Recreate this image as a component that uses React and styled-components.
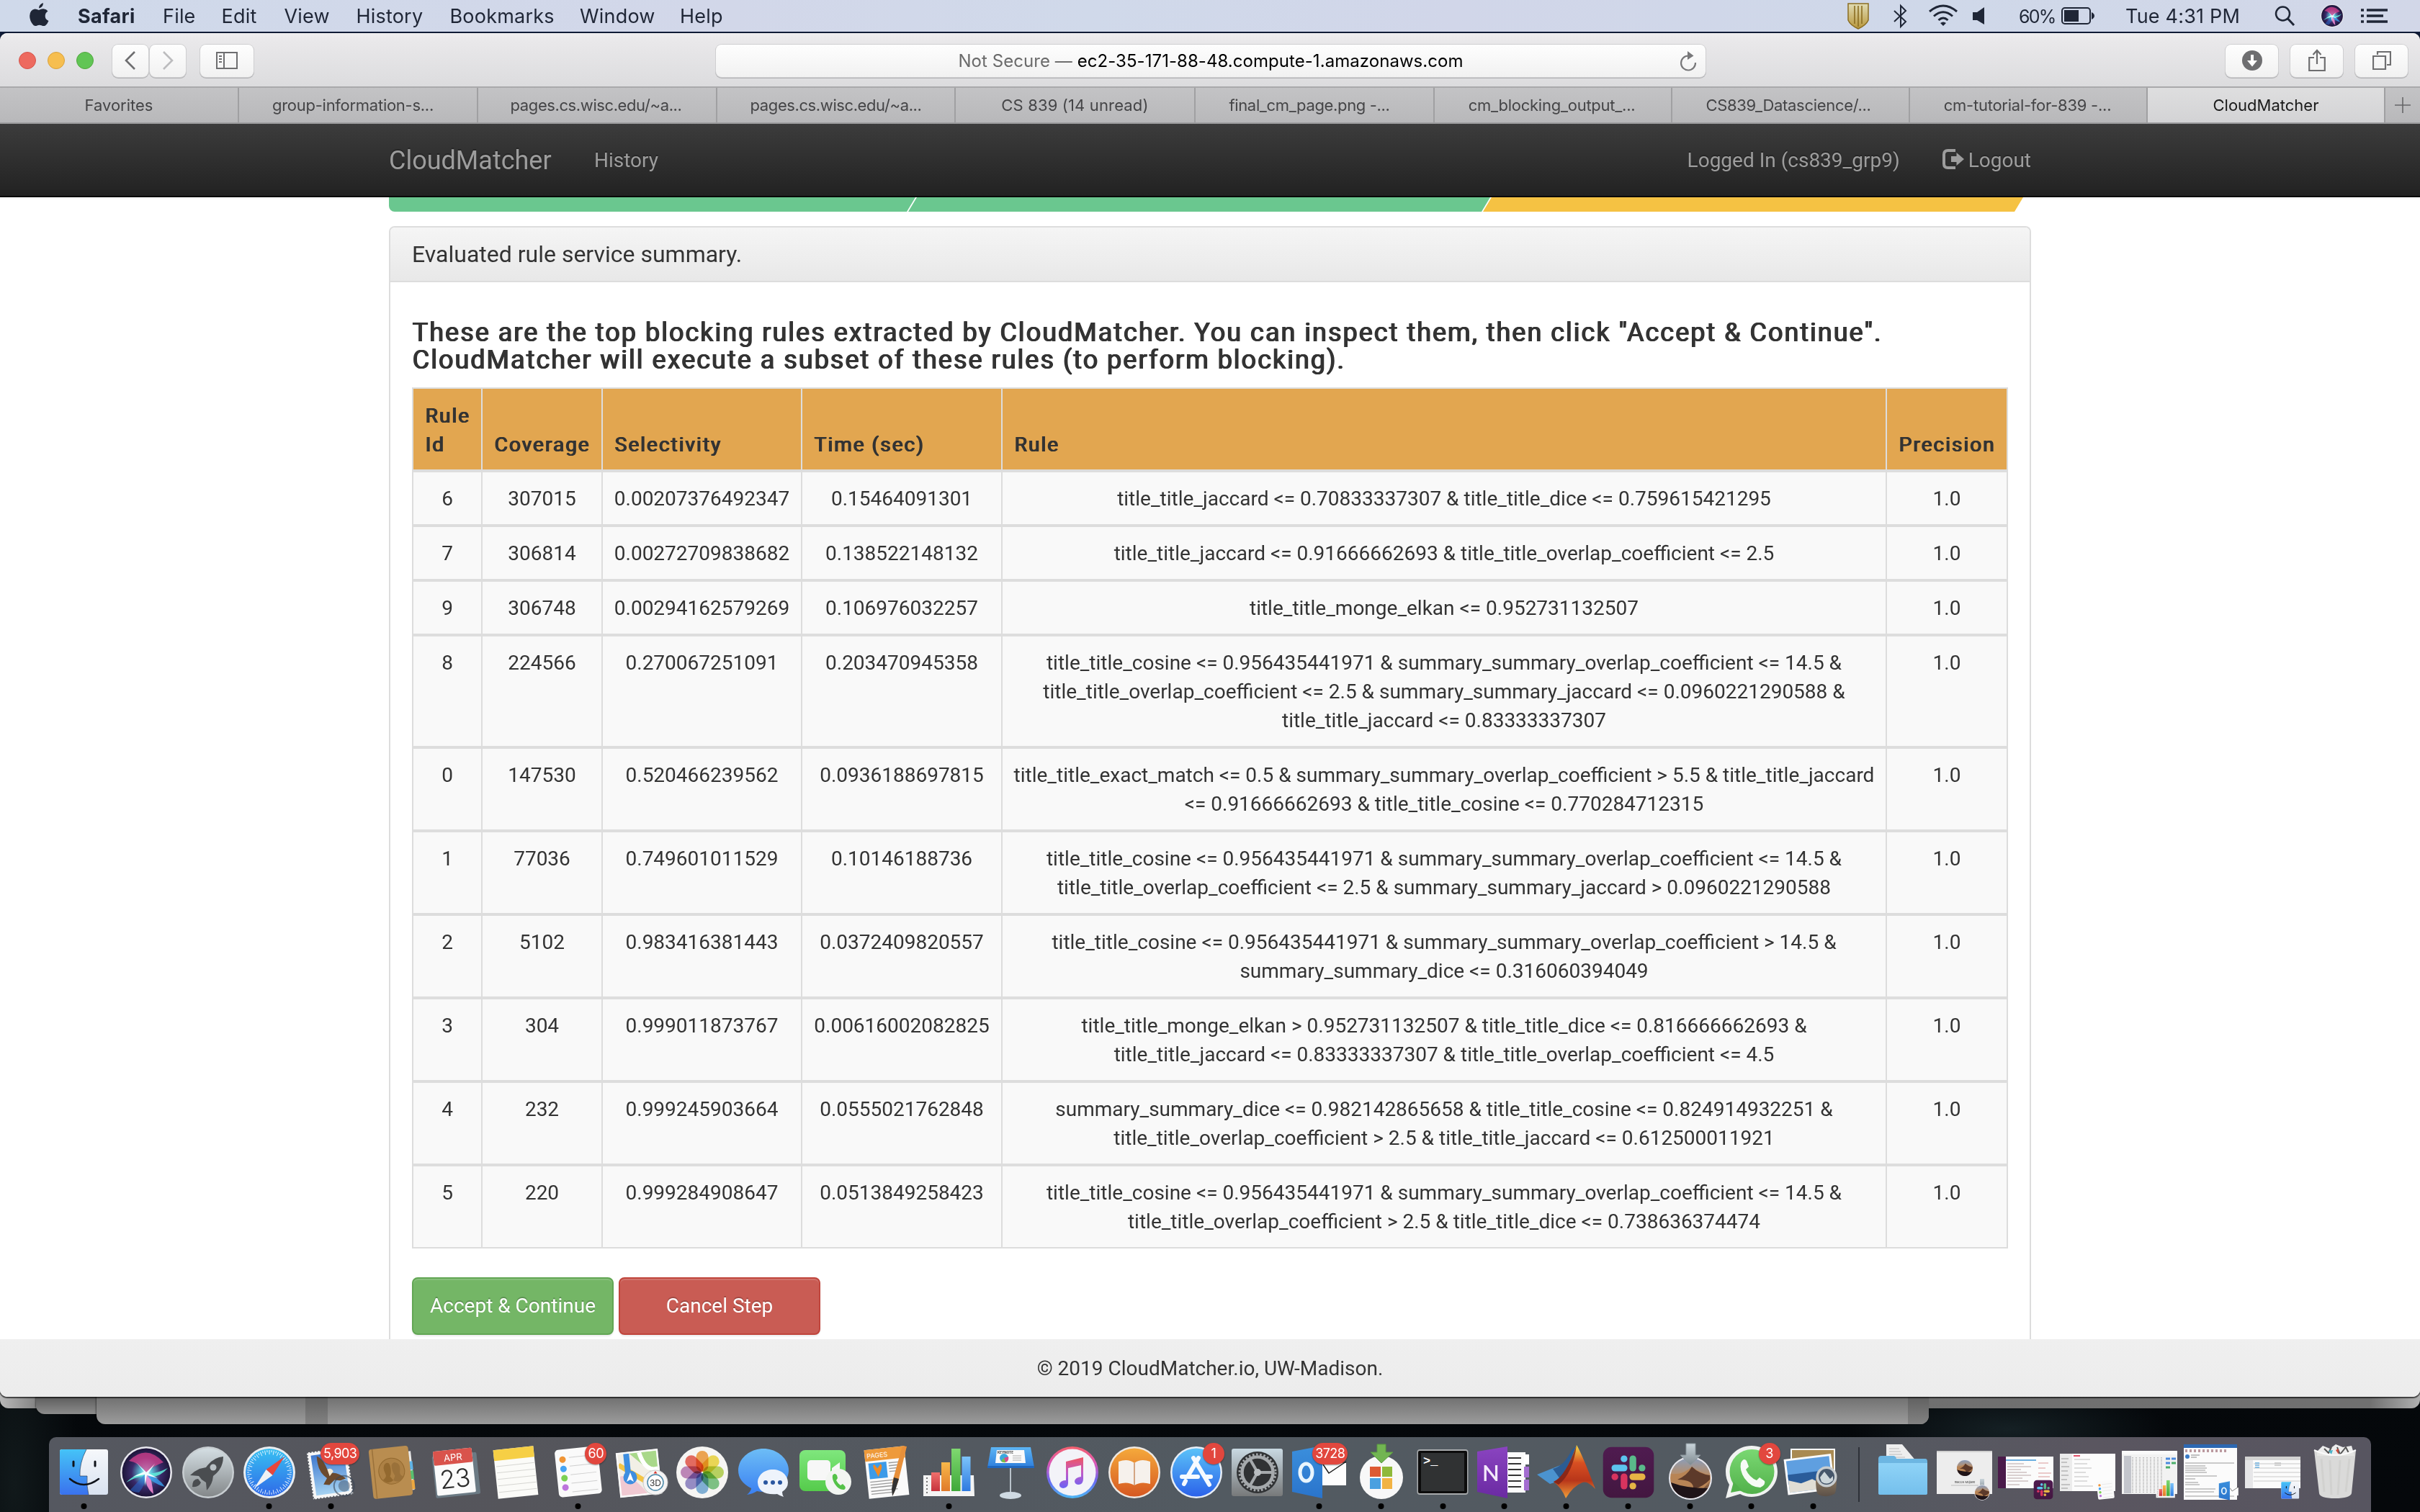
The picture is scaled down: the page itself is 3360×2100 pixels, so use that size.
import React from "react";
import styled, { createGlobalStyle, css } from "styled-components";

const UI = `Inter, "Liberation Sans", sans-serif`;
const WEB = `Roboto, "Liberation Sans", sans-serif`;

const GlobalStyle = createGlobalStyle`
  html, body { margin: 0; padding: 0; background: #04070a; }
  *, *::before, *::after { box-sizing: border-box; }
`;

/* Regular outlines smeared sideways, with the wider advance that goes with it. */
const smearedBold = css`
  font-weight: 400;
  letter-spacing: 2px;
  text-shadow: 0.8px 0 0 currentColor, 1.5px 0 0 currentColor;
`;

/* ---------- desktop ---------- */

const Desktop = styled.div`
  position: relative;
  display: flex;
  flex-direction: column;
  width: 3360px;
  height: 2100px;
  overflow: hidden;
  background:
    radial-gradient(220px 60px at 2790px 1985px, #152024, transparent),
    radial-gradient(90px 300px at 20px 2060px, #11191b, transparent),
    linear-gradient(180deg, #101c38 0, #101c38 60px, #030609 120px, #05080b 100%);
`;

const BackWindow = styled.div`
  position: absolute;
  left: ${(p) => p.$left}px;
  width: ${(p) => p.$width}px;
  top: 1900px;
  height: ${(p) => p.$bottom - 1900}px;
  border-radius: 0 0 12px 12px;
  background: ${(p) => p.$fill};
  box-shadow: -1px 0 2px rgba(0, 0, 0, 0.45);
`;

const BackStripe = styled.div`
  position: absolute;
  top: 0;
  bottom: 0;
  left: ${(p) => p.$left}px;
  width: ${(p) => p.$width}px;
  border-radius: ${(p) => (p.$end ? "0 0 12px 0" : "0")};
  background: linear-gradient(180deg, #606060 40px, #828282 78px);
`;

/* ---------- menu bar ---------- */

const MenuBar = styled.header`
  display: flex;
  align-items: center;
  flex: none;
  height: 44px;
  margin-bottom: 2px;
  padding-left: 40px;
  background: linear-gradient(90deg, #cfd9ea, #d2d7e9 30%, #d0d9ea 45%, #d1d6e9 60%, #cfd8e9 80%, #d2d7e8);
  color: #1f2636;
  font: 400 27px/44px ${UI};
`;

const MenuIcon = styled.svg`
  flex: none;
  display: block;
  width: ${(p) => p.$w}px;
  height: 44px;
  margin-right: ${(p) => p.$gap || 0}px;
  overflow: visible;
`;

const MenuItem = styled.span`
  flex: none;
  width: ${(p) => p.$w}px;
  padding-top: 1px;
  font-size: ${(p) => p.$size || 27}px;
  font-weight: ${(p) => (p.$bold ? 700 : 400)};
  letter-spacing: ${(p) => p.$ls ?? 0.2}px;
  white-space: nowrap;
`;

const MenuSpacer = styled.div`
  flex: 1;
`;

/* ---------- browser window ---------- */

const Window = styled.section`
  position: relative;
  display: flex;
  flex-direction: column;
  flex: none;
  height: 1894px;
  border-radius: 10px;
  overflow: hidden;
  background: #fff;
`;

const WindowShadow = styled.div`
  position: relative;
  flex: none;
  border-radius: 10px;
  box-shadow: 0 1px 1px 1px rgba(0, 0, 0, 0.6);
`;

const Toolbar = styled.div`
  display: flex;
  align-items: center;
  flex: none;
  height: 76px;
  padding: 2px 16px 0 26px;
  background: linear-gradient(180deg, #efeef0, #e9e8ea 15%, #dcdcde);
  border-bottom: 2px solid #a9a9ab;
`;

const Lights = styled.div`
  display: flex;
  gap: 16px;
  margin-right: 26px;
`;

const Light = styled.i`
  width: 24px;
  height: 24px;
  border-radius: 50%;
  background: ${(p) => p.$color};
  border: 1px solid ${(p) => p.$edge};
`;

const ToolButton = styled.div`
  display: flex;
  align-items: center;
  justify-content: center;
  flex: none;
  width: ${(p) => p.$w}px;
  height: 45px;
  margin-right: ${(p) => p.$gap || 0}px;
  border-radius: 8px;
  background: linear-gradient(180deg, #fefefe, #f1f1f1);
  box-shadow: 0 0 0 1px #cfcfd1, 0 1px 0 1px #b2b2b4;
`;

const Address = styled.div`
  position: relative;
  display: flex;
  align-items: center;
  justify-content: center;
  gap: 7px;
  width: 1374px;
  height: 45px;
  margin-left: 642px;
  margin-right: 722px;
  padding-top: 2px;
  border-radius: 8px;
  background: linear-gradient(180deg, #fefefe, #f1f1f1);
  box-shadow: 0 0 0 1px #cfcfd1, 0 1px 0 1px #b2b2b4;
  color: #000;
  font: 400 24px/44px ${UI};
  letter-spacing: 0.05px;
`;

const Muted = styled.span`
  color: #6b6b6b;
`;

const Reload = styled.svg`
  position: absolute;
  right: 10px;
  top: 8px;
`;

const TabBar = styled.nav`
  display: flex;
  flex: none;
  height: 50px;
  background: linear-gradient(180deg, #c3c3c5, #b8b8ba);
  border-bottom: 2px solid #9c9c9e;
  color: #454547;
  font: 400 22px/48px ${UI};
`;

const Tab = styled.div`
  flex: none;
  width: ${(p) => p.$w}px;
  padding-right: ${(p) => p.$shift || 0}px;
  text-align: center;
  white-space: nowrap;
  letter-spacing: ${(p) => p.$ls ?? 0}px;
  border-right: 2px solid #a0a0a2;
  color: ${(p) => (p.$active ? "#1a1a1a" : "inherit")};
  background: ${(p) => (p.$active ? "linear-gradient(180deg, #dededf, #d3d3d5)" : "none")};
`;

const NewTab = styled.div`
  display: flex;
  flex: 1;
  align-items: center;
  justify-content: center;
`;

/* ---------- web page ---------- */

const Navbar = styled.div`
  display: flex;
  align-items: center;
  flex: none;
  height: 102px;
  padding: 1px 540px 0;
  background: linear-gradient(180deg, #3c3c3c, #222);
  border-bottom: 2px solid #080808;
  color: #9d9d9d;
  font: 400 28px/40px ${WEB};
  text-shadow: 0 -2px 0 rgba(0, 0, 0, 0.25);
`;

const Brand = styled.span`
  width: 285px;
  font-size: 36px;
`;

const NavRight = styled.div`
  display: flex;
  align-items: center;
  margin-left: auto;
`;

const NavUser = styled.span`
  margin-right: 59px;
`;

const LogoutIcon = styled.svg`
  margin: -4px 6px 0 0;
`;

const Steps = styled.div`
  display: flex;
  flex: none;
  height: 20px;
  width: 2270px;
  margin-left: 540px;
`;

const Step = styled.div`
  width: ${(p) => p.$w}px;
  margin-right: -10px;
  background: ${(p) => p.$color};
  border-bottom-left-radius: ${(p) => (p.$first ? 8 : 0)}px;
  clip-path: ${(p) =>
    p.$first
      ? "polygon(0 0, 100% 0, calc(100% - 12px) 100%, 0 100%)"
      : "polygon(12px 0, 100% 0, calc(100% - 12px) 100%, 0 100%)"};
`;

const Panel = styled.main`
  display: flex;
  flex-direction: column;
  flex: 1;
  width: 2280px;
  min-height: 0;
  margin: 20px 0 0 540px;
  border: 2px solid #ddd;
  border-bottom: 0;
  border-radius: 8px 8px 0 0;
  color: #333;
  font: 400 28px/40px ${WEB};
`;

const PanelHeader = styled.div`
  flex: none;
  height: 76px;
  padding: 19px 30px 17px;
  background: linear-gradient(180deg, #f5f5f5, #e8e8e8);
  border-bottom: 2px solid #ddd;
  border-radius: 6px 6px 0 0;
  font-size: 32px;
  line-height: 36px;
`;

const PanelBody = styled.div`
  display: flex;
  flex-direction: column;
  padding: 51px 30px 0;
`;

const Heading = styled.h4`
  ${smearedBold}
  margin: 0 0 19px;
  height: 76px;
  font-size: 36px;
  line-height: 38px;
  white-space: nowrap;
`;

const RuleTable = styled.table`
  width: 2216px;
  table-layout: fixed;
  border-collapse: separate;
  border-spacing: 0;
  border-right: 2px solid #ddd;
  border-bottom: 0;
`;

const Th = styled.th`
  ${smearedBold}
  height: 116px;
  padding: 18px 14px 14px 16px;
  border: solid #ddd;
  border-width: 2px 0 2px 2px;
  background: #e2a650;
  text-align: left;
  vertical-align: bottom;
`;

const Td = styled.td`
  padding: 17px 0 15px;
  border: solid #ddd;
  border-width: 2px 0 2px 2px;
  background: #f9f9f9;
  text-align: center;
  vertical-align: top;
  white-space: nowrap;
`;

const Actions = styled.div`
  display: flex;
  gap: 7px;
  margin-top: 40px;
`;

const Button = styled.button`
  width: 280px;
  height: 80px;
  padding: 0;
  border: 2px solid ${(p) => p.$edge};
  border-radius: 8px;
  background: ${(p) => p.$color};
  box-shadow: inset 0 2px 0 rgba(255, 255, 255, 0.15), 0 2px 2px rgba(0, 0, 0, 0.075);
  color: #fff;
  font: 400 28px/40px ${WEB};
  text-shadow: 0 -2px 0 rgba(0, 0, 0, 0.2);
`;

const Footer = styled.footer`
  flex: none;
  height: 80px;
  padding-top: 1px;
  background: linear-gradient(180deg, #efefef, #ececec);
  color: #333;
  text-align: center;
  font: 400 28px/80px ${WEB};
`;

/* ---------- dock ---------- */

const Dock = styled.div`
  position: relative;
  display: flex;
  flex: none;
  width: 3224px;
  height: 104px;
  margin: 56px 0 0 68px;
  padding-left: 6px;
  border-radius: 10px 10px 0 0;
  background: linear-gradient(90deg, #555860, #55555b 20%, #54585f 30%, #525a61 50%, #535a61 75%, #5a5660 88%, #575560);
`;

const Slot = styled.div`
  position: relative;
  flex: none;
  width: 85.76px;
  height: 104px;
`;

const Glyph = styled.svg`
  display: block;
  width: 86px;
  height: 104px;
  overflow: visible;
`;

const Separator = styled.i`
  flex: none;
  width: 2px;
  height: 76px;
  margin: 14px 17px 0 19px;
  background: #2e3138;
`;

const Badge = styled.span`
  position: absolute;
  top: 8px;
  right: 3.5px;
  min-width: 30px;
  height: 30px;
  padding: 0 ${(p) => p.$pad || 0}px;
  border-radius: 15px;
  background: #e2473e;
  box-shadow: 0 1px 2px rgba(0, 0, 0, 0.4);
  color: #fff;
  text-align: center;
  font: 400 18px/30px ${UI};
  letter-spacing: -0.6px;
`;

/* ---------- drawings ---------- */

const stops = (list) =>
  list.map((c, i) => <stop key={i} offset={i / (list.length - 1)} stopColor={c} />);

const LINEAR = {
  finder: ["#45c3f7", "#3a72ee"],
  finderR: ["#f6f8fb", "#d9e2f0"],
  grey: ["#d4dee3", "#84888a"],
  safari: ["#38c0f2", "#2f69e8"],
  sky: ["#3f79cf", "#a5d2f2"],
  msg: ["#6dbdf6", "#3a80f2"],
  face: ["#7fe77d", "#55cb4b"],
  key: ["#5cb5f5", "#2f7fdc"],
  itunes: ["#f5606c", "#d959b8", "#6a6af2", "#4cb8f4"],
  note: ["#f05560", "#c05ac8", "#6a62f4"],
  books: ["#f5a93b", "#d65821"],
  store: ["#5bc2f8", "#2b62ea"],
  pref: ["#c9d9e2", "#77797a"],
  outlook: ["#3b8fdc", "#2a74cc"],
  one: ["#8a44c0", "#6a2aa2"],
  slack: ["#4f1b50", "#431740"],
  whats: ["#7ad872", "#52b14b"],
  matlab: ["#f4e04a", "#d84f22", "#b8361a", "#f0a03a"],
  folder: ["#8fd3f7", "#74bfec"],
  dune: ["#8a9dba", "#c08b5a", "#2c1a1c"],
  arrow: ["#c9d4da", "#7e8990"],
  red: ["#f0706c", "#c6323c"],
  orange: ["#f8b84a", "#e07a2a"],
  green: ["#7fd870", "#3fa83a"],
  blue: ["#7cc4fa", "#2e7ae0"],
  glass: ["#8e7a62", "#5c5148"],
  shield: ["#e0dcb4", "#b8963a"],
};

const DefsSvg = styled.svg`
  position: absolute;
`;

const Defs = () => (
  <DefsSvg width="0" height="0">
    <defs>
      {Object.entries(LINEAR).map(([id, list]) => (
        <linearGradient key={id} id={id} x1="0" y1="0" x2="0" y2="1">
          {stops(list)}
        </linearGradient>
      ))}
      <radialGradient id="siri" cx=".5" cy=".5" r=".55">
        <stop offset="0" stopColor="#dffcff" />
        <stop offset=".2" stopColor="#5fc6dc" />
        <stop offset=".55" stopColor="#3a2a6a" />
        <stop offset="1" stopColor="#150f2c" />
      </radialGradient>
    </defs>
  </DefsSvg>
);

const SiriOrb = ({ cx, cy, r }) => (
  <g>
    <circle cx={cx} cy={cy} r={r} fill="#e8e8ee" />
    <circle cx={cx} cy={cy} r={r * 0.93} fill="url(#siri)" />
    <g transform={`translate(${cx} ${cy}) scale(${r / 36})`}>
      <path d="M-24-16Q0-40 24-14Q8-8 0 0Q-10-14-24-16Z" fill="#d8408e" opacity=".75" />
      <path d="M-28 14Q-10-2 0 0Q10 4 30-6Q16 10 0 4Q-14 6-28 14Z" fill="#5ff0dc" opacity=".85" />
      <path d="M0 0Q-4 18 10 30Q8 12 4 2Z" fill="#f08ad0" opacity=".9" />
      <path d="M0 0Q18 8 26 20Q4 14 0 0Z" fill="#3aa0f0" opacity=".8" />
      <path d="M0 0Q-16 18-20 22Q-26 26-10 28Q0 16 0 0Z" fill="#2a70d8" opacity=".5" />
      <path d="M-14-14L0 0L12-12L3 1L16 8L1 4L-2 18L-2 3L-18 6L-3-1Z" fill="#effeff" />
    </g>
  </g>
);

const Dunes = ({ cx, cy, r }) => (
  <g transform={`translate(${cx} ${cy}) scale(${r / 28})`}>
    <circle r="30" fill="#e8e8ee" />
    <circle r="28" fill="url(#dune)" />
    <path d="M-27-6Q-10-4 2-16Q12-8 27-4L27 4Q12 24-6 26Q-24 20-27 4Z" fill="#b88455" />
    <path d="M2-16Q-4-4-18 2Q6 2 4 16Q20 10 27 2V-4Q12-6 2-16Z" fill="#5d3a2a" />
    <path d="M-27 6Q-6 14 24 14Q14 28 0 28Q-22 26-27 6Z" fill="#1f1418" />
  </g>
);

const SlackMark = ({ x, y, s }) => (
  <g transform={`translate(${x} ${y}) scale(${s})`}>
    <rect x="-36" y="-36" width="72" height="72" rx="12" fill="url(#slack)" />
    <rect x="-11" y="-24" width="9.5" height="9.5" rx="4.7" fill="#5cc3ee" />
    <rect x="-24" y="-11" width="22.5" height="9.5" rx="4.7" fill="#5cc3ee" />
    <rect x="1.5" y="-24" width="9.5" height="22.5" rx="4.7" fill="#5ab98a" />
    <rect x="14.5" y="-11" width="9.5" height="9.5" rx="4.7" fill="#5ab98a" />
    <rect x="-24" y="1.5" width="9.5" height="9.5" rx="4.7" fill="#d8345f" />
    <rect x="-11" y="1.5" width="9.5" height="22.5" rx="4.7" fill="#d8345f" />
    <rect x="1.5" y="1.5" width="22.5" height="9.5" rx="4.7" fill="#e6b445" />
    <rect x="1.5" y="14.5" width="9.5" height="9.5" rx="4.7" fill="#e6b445" />
  </g>
);

const FinderFace = () => (
  <g>
    <rect x="9" y="17" width="67" height="63" rx="3" fill="url(#finderR)" />
    <path d="M12 17H46Q36 36 37 54H47Q46 68 49 80H12Q9 80 9 77V20Q9 17 12 17Z" fill="url(#finder)" />
    <path d="M46 17Q36 36 37 54H47Q46 68 49 80" fill="none" stroke="#1c2b45" strokeWidth="1" opacity=".6" />
    <path d="M28 34V40M58 34V40" stroke="#10131a" strokeWidth="3" strokeLinecap="round" />
    <path d="M23 58Q42 74 63 58" fill="none" stroke="#10131a" strokeWidth="2.6" strokeLinecap="round" />
  </g>
);

const ChartBars = () => (
  <g>
    <path d="M7 53H77L78 82H7Z" fill="#f4f4f4" />
    <path d="M12 56V78" stroke="#777" strokeWidth="2" strokeDasharray="2 3" />
    <rect x="18" y="49" width="12" height="26" fill="url(#red)" />
    <rect x="32" y="35" width="12" height="40" fill="url(#orange)" />
    <rect x="46" y="16" width="12.5" height="59" fill="url(#green)" />
    <rect x="60.5" y="27" width="12" height="48" fill="url(#blue)" />
  </g>
);

const OutlookMark = () => (
  <g>
    <path d="M47 36H80V67H47Z" fill="#fdfdfd" />
    <path d="M48 38L56 50L80 34" fill="none" stroke="#1d1d1d" strokeWidth="1.5" />
    <path d="M5 20L47 12V85L5 76Z" fill="url(#outlook)" />
    <ellipse cx="24.5" cy="49" rx="8.5" ry="12" fill="none" stroke="#e9f5fd" strokeWidth="5" />
  </g>
);

const RemindersSheet = () => (
  <g transform="rotate(-6 43 49)">
    <rect x="13" y="15" width="60" height="66" rx="5" fill="#fafafa" />
    <path d="M32 27H68M32 39H68M32 51H68M32 63H68M32 75H68" stroke="#cfcfcf" />
    <circle cx="23" cy="29" r="4.5" fill="#f09536" />
    <circle cx="23" cy="42" r="4.5" fill="#45a4f4" />
    <circle cx="23" cy="55" r="4.5" fill="#7bd154" />
    <circle cx="23" cy="68" r="4.5" fill="#bd74dc" />
  </g>
);

const Label = ({ x, y, size, fill = "#fff", weight = 400, children, anchor = "middle", family = "Inter, sans-serif" }) => (
  <text x={x} y={y} fontSize={size} fill={fill} fontWeight={weight} textAnchor={anchor} fontFamily={family}>
    {children}
  </text>
);

const ticks = Array.from({ length: 60 }, (_, i) => i * 6);
const petals = ["#f29b38", "#f0d93c", "#b3d24a", "#6cbf74", "#6fa8d8", "#8a7fc4", "#b978b4", "#e8564a"];

const Petal = styled.rect`
  mix-blend-mode: multiply;
`;

const ICONS = {
  finder: <FinderFace />,
  siri: <SiriOrb cx={43} cy={49} r={36} />,
  launchpad: (
    <g>
      <circle cx="43" cy="49" r="36" fill="#c8ced2" />
      <circle cx="43" cy="49" r="33.5" fill="url(#grey)" />
      <path d="M64 27Q50 28 40 42L31 44Q24 47 18 53L30 54L34 59L40 63L41 74Q47 67 49 60L50 54Q64 44 64 27Z" fill="#4a4d50" />
      <circle cx="50" cy="42" r="4.5" fill="#b9c0c4" />
      <path d="M29 58Q21 58 21 69Q30 70 33 63Z" fill="#4a4d50" />
    </g>
  ),
  safari: (
    <g>
      <circle cx="43" cy="49" r="36" fill="#e9edf0" />
      <circle cx="43" cy="49" r="33" fill="url(#safari)" />
      {ticks.map((a) => (
        <path key={a} d={a % 12 ? "M43 18V21" : "M43 18V24"} stroke="#e3f1fd" strokeWidth="1" transform={`rotate(${a} 43 49)`} />
      ))}
      <path d="M64 27L47.5 53L38.5 45Z" fill="#e8463c" />
      <path d="M22 71L47.5 53L38.5 45Z" fill="#f0f2f4" />
    </g>
  ),
  mail: (
    <g transform="rotate(-8 43 49)">
      <rect x="13" y="17" width="56" height="66" fill="#f6f6f6" />
      <rect x="13" y="17" width="56" height="66" fill="none" stroke="#54585f" strokeWidth="2.5" strokeDasharray="2 2.5" />
      <rect x="18" y="22" width="46" height="56" fill="url(#sky)" />
      <path d="M26 24Q34 28 38 44L44 50Q52 50 62 60L54 62L46 60L38 66L30 64L36 56Q24 46 26 24Z" fill="#6b4a2e" />
      <path d="M38 44Q44 42 46 48L40 54Z" fill="#f3ead6" />
      <circle cx="58" cy="70" r="14" fill="none" stroke="#3b4657" strokeWidth="2" opacity=".6" />
      <circle cx="58" cy="70" r="8" fill="#44536a" opacity=".5" />
    </g>
  ),
  contacts: (
    <g transform="rotate(-6 43 49)">
      <path d="M64 22H70V76H64Z" fill="#e8e8e8" />
      <path d="M64 36H71V48H64Z" fill="#5fb4e8" />
      <path d="M64 49H71V61H64Z" fill="#58c070" />
      <path d="M64 62H71V75H64Z" fill="#eda840" />
      <rect x="12" y="14" width="55" height="69" rx="4" fill="#b98d50" />
      <path d="M17 14V83" stroke="#9a713a" strokeWidth="1.5" />
      <circle cx="41" cy="47" r="18" fill="#ad8145" stroke="#93692f" />
      <path d="M33 36Q40 32 40 44Q40 52 38 54L42 60Q34 66 28 58Q34 54 32 50Q28 40 33 36Z" fill="#93692f" />
      <path d="M48 36Q55 38 52 50Q52 54 56 56Q50 66 42 60L45 54Q40 44 42 38Q45 34 48 36Z" fill="#9a713a" />
    </g>
  ),
  calendar: (
    <g transform="rotate(-6 43 49)">
      <rect x="13" y="24" width="62" height="58" rx="2" fill="#6b7a84" />
      <rect x="15" y="17" width="54" height="62" rx="2" fill="#fbfbfb" />
      <rect x="15" y="17" width="54" height="20" rx="2" fill="#d9534c" />
      <Label x={42} y={32.5} size={13}>APR</Label>
      <Label x={42} y={70} size={35} fill="#2b2b2b" weight={300}>23</Label>
    </g>
  ),
  notes: (
    <g transform="rotate(-6 43 49)">
      <rect x="14" y="15" width="56" height="68" fill="#fbfbf8" />
      <rect x="14" y="15" width="56" height="15" fill="#f6cf45" />
      <path d="M16 38H69M16 47H69M16 56H69M16 65H69M16 74H69" stroke="#d6d6d2" />
    </g>
  ),
  reminders: <RemindersSheet />,
  maps: (
    <g>
      <g transform="rotate(-6 43 49)">
        <rect x="12" y="19" width="58" height="62" fill="#f2efe6" />
        <path d="M30 21H68V60Z" fill="#a9d88a" />
        <path d="M14 52Q30 48 50 79H14Z" fill="#f0c9d2" />
        <path d="M14 36L68 76" stroke="#f4c544" strokeWidth="7" />
        <path d="M26 21V60" stroke="#3e8ee0" strokeWidth="8" />
        <path d="M44 21Q50 50 68 46" stroke="#fff" strokeWidth="6" fill="none" />
        <rect x="13" y="20" width="56" height="60" fill="none" stroke="#fafafa" strokeWidth="2.5" />
      </g>
      <circle cx="29" cy="56" r="9.5" fill="#3e8ee0" />
      <path d="M29 49L34 62L29 59L24 62Z" fill="#fff" />
      <circle cx="64" cy="63" r="17" fill="#f4f4f4" stroke="#c9c9c9" />
      <circle cx="64" cy="63" r="11" fill="#fff" stroke="#4a88a8" strokeWidth="1.5" />
      <path d="M61.5 50.500L64 47L66.500 50.500Z" fill="#d8352c" />
      <Label x={64} y={67.5} size={12} fill="#333">3D</Label>
    </g>
  ),
  photos: (
    <g>
      <circle cx="43" cy="49" r="36" fill="#f6f5f3" />
      {petals.map((c, i) => (
        <Petal key={c} x="34.5" y="19" width="17" height="29" rx="8.5" fill={c} opacity=".85" transform={`rotate(${i * 45} 43 49)`} />
      ))}
    </g>
  ),
  messages: (
    <g>
      <path d="M43 16C62 16 78 30 78 46S62 76 43 76Q38 76 34 75Q28 79 20 80Q26 75 26 71Q8 62 8 46C8 30 24 16 43 16Z" fill="url(#msg)" />
      <path d="M56 45C68 45 77 53 77 63Q77 71 69 76Q69 80 71 83Q65 81 62 79Q36 81 35 63C35 53 44 45 56 45Z" fill="#eef3fb" />
      <circle cx="46" cy="63" r="3" fill="#2a56a0" />
      <circle cx="56" cy="63" r="3" fill="#2a56a0" />
      <circle cx="66" cy="63" r="3" fill="#2a56a0" />
    </g>
  ),
  facetime: (
    <g>
      <rect x="7" y="18" width="64" height="57" rx="8" fill="url(#face)" />
      <rect x="18" y="32" width="32" height="28" rx="5" fill="#f7f7f7" />
      <path d="M52 43L63 35V57L52 49Z" fill="#f7f7f7" />
      <circle cx="61" cy="62" r="18" fill="#f2f5f1" />
      <path d="M53 53Q56 49 59 53L60 57L58 60Q60 64 64 67L67 65L70 68Q72 71 69 73Q62 74 56 65Q52 58 53 53Z" fill="#54c248" />
    </g>
  ),
  pages: (
    <g>
      <g transform="rotate(-6 43 49)">
        <rect x="14" y="15" width="56" height="68" fill="#fafafa" />
        <rect x="14" y="15" width="56" height="16" fill="#ee9a3a" />
        <Label x={17} y={27} size={9} anchor="start">PAGES</Label>
        <rect x="18" y="34" width="25" height="22" fill="#3d9be8" />
        <path d="M30 54L27 46Q22 38 26 36L30 42L35 36Q38 40 34 46Z" fill="#f08a24" />
        <path d="M46 36H60M46 40H58M46 44H60M46 48H57M18 60H58M18 64H56M18 68H54M18 73H55M18 77H50" stroke="#999" strokeWidth="1.3" />
      </g>
      <path d="M64 12L70 13L58 62L51 80L50 62Z" fill="#e8903a" />
      <path d="M52 56L59 58L54 74L50 82L49 72Z" fill="#333" />
    </g>
  ),
  numbers: <ChartBars />,
  keynote: (
    <g>
      <path d="M42 42H44V80H42Z" fill="#b9c2ca" />
      <ellipse cx="43" cy="81" rx="15" ry="5" fill="#cfdae3" />
      <path d="M16 14H71L76 42H11Z" fill="url(#key)" />
      <path d="M11 40H76V43H11Z" fill="#1f66bd" />
      <path d="M24 18H62L64 36H22Z" fill="#fafafa" />
      <Label x={36} y={22.5} size={4.5} fill="#333" weight={700}>KEYNOTE</Label>
      <circle cx="34" cy="29" r="6" fill="#3ba7dd" />
      <path d="M34 29L40 27A6 6 0 0 1 36 35Z" fill="#d84d8c" />
      <path d="M34 29L36 35A6 6 0 0 1 30 33Z" fill="#7ac143" />
      <path d="M46 26H58M46 29H58M46 32H58" stroke="#aaa" />
    </g>
  ),
  itunes: (
    <g>
      <circle cx="43" cy="49" r="36" fill="url(#itunes)" />
      <circle cx="43" cy="49" r="32.5" fill="#f3f3f8" />
      <path d="M34 34L58 28V58Q58 65 52 66Q46 66 46 61Q47 56 55 55V39L37 43V64Q37 70 30 71Q24 70 25 65Q27 60 34 60Z" fill="url(#note)" />
    </g>
  ),
  ibooks: (
    <g>
      <circle cx="43" cy="49" r="36" fill="#eee8e2" />
      <circle cx="43" cy="49" r="33.5" fill="url(#books)" />
      <path d="M43 36Q34 29 21 34V65Q34 61 43 67Q52 61 65 65V34Q52 29 43 36Z" fill="#f6f1ec" />
      <path d="M43 36V67" stroke="#c98b60" strokeWidth="1.5" />
    </g>
  ),
  appstore: (
    <g>
      <circle cx="43" cy="49" r="36" fill="#e8eef6" />
      <circle cx="43" cy="49" r="33.5" fill="url(#store)" />
      <path d="M46 29L32 53M39 29L61 66M23 55H45M55 55H63M28 61L26 65" stroke="#f6faff" strokeWidth="6" strokeLinecap="round" />
    </g>
  ),
  prefs: (
    <g>
      <rect x="7" y="16" width="71" height="66" rx="3" fill="url(#pref)" />
      <circle cx="43" cy="49" r="29" fill="#303234" />
      <circle cx="43" cy="49" r="25" fill="none" stroke="#a5a9ac" strokeWidth="3" strokeDasharray="2.6 2.63" />
      <circle cx="43" cy="49" r="21.5" fill="none" stroke="#a5a9ac" strokeWidth="4.5" />
      <path d="M43 49H63M43 49L33 31.500M43 49L33 66.500" stroke="#a5a9ac" strokeWidth="4" />
      <circle cx="43" cy="49" r="5" fill="#b9bdc0" />
    </g>
  ),
  outlook: <OutlookMark />,
  windows: (
    <g>
      <circle cx="43" cy="56" r="30" fill="#f8f8f8" />
      <rect x="27" y="41" width="15" height="14" fill="#dd5a33" />
      <rect x="44" y="41" width="14" height="14" fill="#8fb93a" />
      <rect x="27" y="57" width="15" height="15" fill="#4aa0e0" />
      <rect x="44" y="57" width="14" height="15" fill="#f2b343" />
      <path d="M37 10H49V21H59L43 36L28 21H37Z" fill="#72b552" stroke="#5b9a40" />
    </g>
  ),
  terminal: (
    <g>
      <rect x="6.5" y="17" width="71" height="63" rx="4" fill="#a7aaac" />
      <rect x="8" y="19" width="68" height="59" rx="2" fill="#0c0c0c" />
      <rect x="12" y="22" width="60" height="53" fill="#303233" />
      <Label x={15} y={38} size={17} weight={700} anchor="start" family='"Liberation Mono", monospace'>{">_"}</Label>
    </g>
  ),
  onenote: (
    <g>
      <rect x="46" y="21" width="26" height="56" fill="#fbfbfb" />
      <path d="M70 24H77V38H70Z" fill="#fff" />
      <path d="M70 41H77V56H70ZM70 59H77V74H70Z" fill="#a36cd0" />
      <path d="M48 29H66M48 37H66M48 45H66M48 53H66M48 61H66M48 69H66" stroke="#333" strokeWidth="2.2" />
      <path d="M5 20L47 13V85L5 76Z" fill="url(#one)" />
      <Label x={24} y={61} size={31} weight={600} fill="#f3e9fa" family="Lato, sans-serif">N</Label>
    </g>
  ),
  matlab: (
    <g>
      <path d="M2 52L22 44L42 36L36 60L20 65Z" fill="#4b93cf" />
      <path d="M24 44Q40 40 50 18L58 11L44 46L34 58Z" fill="#2b5c94" />
      <path d="M57 11Q64 22 83 72Q72 60 65 63Q52 68 42 85Q36 70 25 62Q40 58 57 11Z" fill="url(#matlab)" />
      <path d="M57 11Q52 50 32 66L25 62Q42 54 57 11Z" fill="#7c2218" opacity=".8" />
    </g>
  ),
  slack: <SlackMark x={43} y={49} s={0.98} />,
  mojave: (
    <g>
      <Dunes cx={43} cy={57} r={28} />
      <path d="M37 9H50V25H57L43 39L29 25H37Z" fill="url(#arrow)" stroke="#8b969d" />
    </g>
  ),
  whatsapp: (
    <g>
      <path d="M43 12C63 12 79 28 79 48S63 83 43 83Q34 83 27 79L7 85L12 66Q7 58 7 48C7 28 23 12 43 12Z" fill="#f1f3f1" />
      <circle cx="43.5" cy="48" r="31" fill="url(#whats)" />
      <path d="M14 77L18 62L30 74Z" fill="#52b14b" />
      <path d="M28 36Q32 28 36 33L39 41L35 45Q40 56 50 60L54 56L61 61Q63 66 55 70Q42 70 33 57Q26 46 28 36Z" fill="#f7fbf6" />
    </g>
  ),
  preview: (
    <g>
      <rect x="12" y="17" width="60" height="46" fill="#a98a52" stroke="#fff" strokeWidth="2" />
      <g transform="rotate(-7 43 49)">
        <rect x="4" y="26" width="66" height="50" fill="#fafafa" />
        <rect x="7" y="29" width="60" height="44" fill="#5f9fe0" />
        <path d="M7 48H67V62H7Z" fill="#2a5c9a" />
        <path d="M7 56L24 62L40 58L52 66L67 62V73H7Z" fill="#e0ddd4" />
      </g>
      <path d="M46 56Q46 78 50 80Q62 85 72 79Q75 76 75 56Z" fill="url(#glass)" />
      <circle cx="61" cy="55" r="14.5" fill="#c8cdd0" />
      <circle cx="61" cy="55" r="11" fill="#46566a" />
      <path d="M52 56L58 48L66 58L70 54L70 60Q62 68 54 62Z" fill="#cdd6da" />
    </g>
  ),
  folder: (
    <g>
      <path d="M20 10H42L62 34V50H20Z" fill="#eee" />
      <path d="M24 16H38M24 20H40M24 24H42M24 28H46" stroke="#bbb" />
      <path d="M9 30Q9 26 13 26H30Q33 26 34 30H74Q77 30 77 34V78Q77 80 74 80H12Q9 80 9 78Z" fill="#6db6e2" />
      <path d="M9 36H77V77Q77 80 74 80H12Q9 80 9 77Z" fill="url(#folder)" />
    </g>
  ),
  winMojave: (
    <g>
      <rect x="4" y="19" width="77" height="60" fill="#ededed" />
      <path d="M4 19H81V21H4Z" fill="#cfcfcf" />
      <Dunes cx={43} cy={43} r={11} />
      <Label x={43} y={64} size={4} fill="#333">macOS Mojave</Label>
      <path d="M24 67H62" stroke="#bbb" />
      <path d="M64 58H70V68H74L67 74L60 68H64Z" fill="url(#arrow)" />
      <Dunes cx={67} cy={77} r={10} />
    </g>
  ),
  winSlack: (
    <g>
      <rect x="4" y="27" width="77" height="44" fill="#fbfbfb" />
      <rect x="4" y="27" width="11" height="44" fill="#4a1a4a" />
      <path d="M15 32H57" stroke="#6aaee0" strokeWidth="2" />
      <path d="M17 37H40M17 41H50M17 45H36M17 49H44M17 53H50M17 57H38M17 61H46M17 66H34" stroke="#b8a5a5" strokeWidth="1.2" />
      <path d="M60 36H74M60 43H70M60 50H78M60 55H76" stroke="#d99a9a" strokeWidth="1.2" />
      <SlackMark x={67} y={73} s={0.37} />
    </g>
  ),
  winReminders: (
    <g>
      <rect x="4" y="23" width="77" height="52" fill="#fcfcfc" />
      <rect x="4" y="23" width="17" height="52" fill="#ececec" />
      <path d="M23 26H32" stroke="#e0506a" strokeWidth="2" />
      <path d="M6 30H16M6 35H14M6 41H17M6 47H15M6 53H16M6 59H14M6 66H18M6 71H15" stroke="#999" strokeWidth="1.2" />
      <path d="M24 31H46M24 37H42M24 43H48M24 49H40M24 55H44M24 61H42M24 68H50" stroke="#bdbdbd" strokeWidth="1.2" />
      <g transform="translate(51 55) scale(.38)"><RemindersSheet /></g>
    </g>
  ),
  winNumbers: (
    <g>
      <rect x="4" y="19" width="77" height="60" fill="#f2f2f2" />
      <path d="M4 19H81V24H4Z" fill="#fafafa" />
      <rect x="7" y="26" width="10" height="52" fill="#c3c5cc" />
      <path d="M19 28V78M24 28V78M29 28V78M34 28V78M39 28V78M44 28V78M49 28V78M54 28V78M59 28V78" stroke="#b0b0b0" strokeWidth="1.6" strokeDasharray="1 1" />
      <path d="M65 30H71M73 30H79M65 36H71" stroke="#4a8ade" strokeWidth="3" />
      <path d="M73 36H79M65 42H71" stroke="#4aae6a" strokeWidth="3" />
      <g transform="translate(49 54) scale(.37)"><ChartBars /></g>
    </g>
  ),
  winOutlook: (
    <g>
      <rect x="4" y="10" width="74" height="77" fill="#fbfbfb" />
      <rect x="4" y="10" width="74" height="5" fill="#2d68b2" />
      <path d="M6 19H66" stroke="#bb9aa0" strokeWidth="4" strokeDasharray="3 3" />
      <circle cx="9" cy="27" r="3" fill="#3a7cc8" />
      <path d="M14 25H26M14 28H22" stroke="#888" />
      <path d="M6 36H74M6 40H34M6 43H36M6 46H34M6 49H36M6 54H50M6 58H20M6 63H24M6 66H26M6 72H48M6 76H46M6 82H74" stroke="#9a9a9a" strokeWidth="1.2" />
      <g transform="translate(51 57) scale(.36)"><OutlookMark /></g>
    </g>
  ),
  winFinder: (
    <g>
      <rect x="4" y="27" width="77" height="44" fill="#fbfbfb" />
      <rect x="4" y="27" width="77" height="5" fill="#d3d3d3" />
      <rect x="4" y="32" width="11" height="39" fill="#e6e6e8" />
      <path d="M16 37H81M16 43H81M16 49H81M16 55H81M16 61H81" stroke="#e2e2e2" strokeWidth="2" />
      <path d="M18 36H24M18 39H24M18 42H24" stroke="#6aaee0" strokeWidth="1.5" />
      <path d="M45 36H54M45 39H54" stroke="#aaa" />
      <g transform="translate(51 56) scale(.37)"><FinderFace /></g>
    </g>
  ),
  trash: (
    <g>
      <path d="M18 20L26 12L36 16L44 10L54 14L66 12L70 26H18Z" fill="#ececec" />
      <path d="M28 16L34 22L38 14M46 14L50 24L58 14L62 22" stroke="#555" strokeWidth="2" fill="none" />
      <path d="M34 19L40 18L38 24Z" fill="#4ab2c8" />
      <path d="M44 18L48 16L48 24Z" fill="#c84a3a" />
      <path d="M14 18Q43 34 72 18L66 78Q64 85 43 85T21 78Z" fill="#e4e4e2" opacity=".93" />
      <path d="M24 30L28 76M36 32L38 80M50 32L47 80M63 30L58 76" stroke="#d0d0ce" strokeWidth="3" opacity=".8" />
      <path d="M14 18Q43 32 72 18" fill="none" stroke="#fafafa" strokeWidth="2" />
    </g>
  ),
};

const APPS = [
  ["finder", true], ["siri"], ["launchpad"], ["safari", true], ["mail", true, "5,903"],
  ["contacts"], ["calendar"], ["notes"], ["reminders", true, "60"], ["maps"], ["photos"],
  ["messages"], ["facetime"], ["pages"], ["numbers", true], ["keynote"], ["itunes"],
  ["ibooks"], ["appstore", false, "1"], ["prefs"], ["outlook", true, "3728"],
  ["windows", true], ["terminal", true], ["onenote", true], ["matlab", true],
  ["slack", true], ["mojave", true], ["whatsapp", true, "3"], ["preview", true],
];

const MINIMIZED = ["folder", "winMojave", "winSlack", "winReminders", "winNumbers", "winOutlook", "winFinder", "trash"];

const DockItem = ({ name, running, badge }) => (
  <Slot>
    <Glyph viewBox="0 0 86 104">
      {ICONS[name]}
      {running && <circle cx="42.5" cy="96" r="4" fill="#000" />}
    </Glyph>
    {badge && <Badge $pad={badge.length > 2 ? 4 : 0}>{badge}</Badge>}
  </Slot>
);

/* ---------- data ---------- */

const MENUS = [
  ["File", 81.5], ["Edit", 87], ["View", 100], ["History", 130],
  ["Bookmarks", 180.5], ["Window", 139], ["Help", 80],
];

const TABS = [
  { label: "Favorites", w: 332 },
  { label: "group-information-s...", w: 332, ls: -0.27, shift: 14 },
  { label: "pages.cs.wisc.edu/~a...", w: 332, ls: -0.4, shift: 3 },
  { label: "pages.cs.wisc.edu/~a...", w: 331, ls: -0.4 },
  { label: "CS 839 (14 unread)", w: 333, ls: 0.15 },
  { label: "final_cm_page.png -...", w: 332, ls: -0.35, shift: 14 },
  { label: "cm_blocking_output_...", w: 330, ls: -0.25, shift: 3 },
  { label: "CS839_Datascience/...", w: 330, ls: -0.3, shift: 6 },
  { label: "cm-tutorial-for-839 -...", w: 330, ls: -0.25, shift: 2 },
  { label: "CloudMatcher", w: 330, active: true },
];

const COLUMNS = [
  ["Rule Id", 96], ["Coverage", 167], ["Selectivity", 277],
  ["Time (sec)", 278], ["Rule", 1228], ["Precision", 168],
];

const RULES = [
  ["6", "307015", "0.00207376492347", "0.15464091301", ["title_title_jaccard <= 0.70833337307 & title_title_dice <= 0.759615421295"], "1.0"],
  ["7", "306814", "0.00272709838682", "0.138522148132", ["title_title_jaccard <= 0.91666662693 & title_title_overlap_coefficient <= 2.5"], "1.0"],
  ["9", "306748", "0.00294162579269", "0.106976032257", ["title_title_monge_elkan <= 0.952731132507"], "1.0"],
  ["8", "224566", "0.270067251091", "0.203470945358", [
    "title_title_cosine <= 0.956435441971 & summary_summary_overlap_coefficient <= 14.5 &",
    "title_title_overlap_coefficient <= 2.5 & summary_summary_jaccard <= 0.0960221290588 &",
    "title_title_jaccard <= 0.83333337307"], "1.0"],
  ["0", "147530", "0.520466239562", "0.0936188697815", [
    "title_title_exact_match <= 0.5 & summary_summary_overlap_coefficient > 5.5 & title_title_jaccard",
    "<= 0.91666662693 & title_title_cosine <= 0.770284712315"], "1.0"],
  ["1", "77036", "0.749601011529", "0.10146188736", [
    "title_title_cosine <= 0.956435441971 & summary_summary_overlap_coefficient <= 14.5 &",
    "title_title_overlap_coefficient <= 2.5 & summary_summary_jaccard > 0.0960221290588"], "1.0"],
  ["2", "5102", "0.983416381443", "0.0372409820557", [
    "title_title_cosine <= 0.956435441971 & summary_summary_overlap_coefficient > 14.5 &",
    "summary_summary_dice <= 0.316060394049"], "1.0"],
  ["3", "304", "0.999011873767", "0.00616002082825", [
    "title_title_monge_elkan > 0.952731132507 & title_title_dice <= 0.816666662693 &",
    "title_title_jaccard <= 0.83333337307 & title_title_overlap_coefficient <= 4.5"], "1.0"],
  ["4", "232", "0.999245903664", "0.0555021762848", [
    "summary_summary_dice <= 0.982142865658 & title_title_cosine <= 0.824914932251 &",
    "title_title_overlap_coefficient > 2.5 & title_title_jaccard <= 0.612500011921"], "1.0"],
  ["5", "220", "0.999284908647", "0.0513849258423", [
    "title_title_cosine <= 0.956435441971 & summary_summary_overlap_coefficient <= 14.5 &",
    "title_title_overlap_coefficient > 2.5 & title_title_dice <= 0.738636374474"], "1.0"],
];

const Cell = ({ value }) => (
  <Td>
    {Array.isArray(value)
      ? value.map((line, i) => (
          <React.Fragment key={i}>
            {i > 0 && <br />}
            {line}
          </React.Fragment>
        ))
      : value}
  </Td>
);

/* ---------- sections ---------- */

const SystemMenu = () => (
  <MenuBar>
    <MenuIcon $w={28} $gap={40} viewBox="0 0 28 44">
      <path d="M20 4Q20 10 14 11.5Q14 6 20 4ZM14 14Q17 12 20.5 12.3Q24.500 12.600 26.500 15.500Q22.500 18 22.700 22.500Q22.900 27 27.500 29Q26 33 23 35.500Q20.500 36.800 17.500 35.200Q14.500 34 11.500 35.400Q9 37 6.500 35Q1 29 1.200 22Q1.500 13.500 8.500 12.500Q11 12.500 14 14Z" fill="#1f2636" />
    </MenuIcon>
    <MenuItem $w={118} $bold $ls={0.3}>Safari</MenuItem>
    {MENUS.map(([label, w]) => (
      <MenuItem key={label} $w={w}>{label}</MenuItem>
    ))}
    <MenuSpacer />
    <MenuIcon $w={30} $gap={34} viewBox="0 0 30 44">
      <path d="M1 5H29V28Q26 35 15 40Q4 35 1 28Z" fill="url(#shield)" stroke="#8a6d22" strokeWidth="1.5" />
      <path d="M10 8V33M15 8V37M20 8V33" stroke="#8a6d22" strokeWidth="1.6" />
    </MenuIcon>
    <MenuIcon $w={19} $gap={30} viewBox="0 0 19 44">
      <path d="M1 15L17 30L10 37V8L17 15L1 30" fill="none" stroke="#1f2636" strokeWidth="2" />
    </MenuIcon>
    <MenuIcon $w={40} $gap={21} viewBox="0 0 40 44">
      <path d="M1 16Q20 0 39 16M7 22.500Q20 11 33 22.500M13.500 28Q20 22 26.500 28" fill="none" stroke="#1f2636" strokeWidth="3" />
      <path d="M16 32Q20 29 24 32L20 36Z" fill="#1f2636" />
    </MenuIcon>
    <MenuIcon $w={17} $gap={47} viewBox="0 0 17 44">
      <path d="M0 17H6L16 10V34L6 28H0Z" fill="#1f2636" />
    </MenuIcon>
    <MenuItem $w={59} $size={25} $ls={-1.7}>60%</MenuItem>
    <MenuIcon $w={46} $gap={43} viewBox="0 0 46 44">
      <rect x="1" y="11" width="39" height="22" rx="4" fill="none" stroke="#1f2636" strokeWidth="2" />
      <rect x="4" y="14" width="20" height="16" fill="#1f2636" />
      <path d="M42 17Q46 19 46 22T42 27Z" fill="#1f2636" />
    </MenuIcon>
    <MenuItem $w={207} $ls={0.2}>Tue 4:31 PM</MenuItem>
    <MenuIcon $w={28} $gap={36} viewBox="0 0 28 44">
      <circle cx="11.5" cy="19" r="9.5" fill="none" stroke="#1f2636" strokeWidth="2.5" />
      <path d="M18.500 26L27 35" stroke="#1f2636" strokeWidth="3" />
    </MenuIcon>
    <MenuIcon $w={32} $gap={24} viewBox="0 0 32 44">
      <SiriOrb cx={16} cy={22} r={16} />
    </MenuIcon>
    <MenuIcon $w={37} $gap={45} viewBox="0 0 37 44">
      <path d="M0 14H4M8 14H37M0 22H4M8 22H31M0 30H4M8 30H37" stroke="#1f2636" strokeWidth="3.6" />
    </MenuIcon>
  </MenuBar>
);

const BrowserChrome = () => (
  <>
    <Toolbar>
      <Lights>
        <Light $color="#ed6a5f" $edge="#d5544b" />
        <Light $color="#f6be50" $edge="#d9a13c" />
        <Light $color="#61c555" $edge="#51a73e" />
      </Lights>
      <ToolButton $w={50} $gap={2}>
        <svg width="16" height="26" viewBox="0 0 16 26"><path d="M14 1L2 13L14 25" fill="none" stroke="#6e6e70" strokeWidth="2.6" /></svg>
      </ToolButton>
      <ToolButton $w={50} $gap={20}>
        <svg width="16" height="26" viewBox="0 0 16 26"><path d="M2 1L14 13L2 25" fill="none" stroke="#bcbcbe" strokeWidth="2.6" /></svg>
      </ToolButton>
      <ToolButton $w={74}>
        <svg width="30" height="24" viewBox="0 0 30 24">
          <path d="M1 1H29V23H1ZM11 1V23" fill="none" stroke="#6e6e70" strokeWidth="2" />
          <path d="M4 6H8M4 10H8M4 14H8" stroke="#6e6e70" strokeWidth="2" />
        </svg>
      </ToolButton>
      <Address>
        <Muted>Not Secure —</Muted>
        <span>ec2-35-171-88-48.compute-1.amazonaws.com</span>
        <Reload width="28" height="30" viewBox="0 0 28 30">
          <path d="M14 7.500A10 10 0 1 0 24 17" fill="none" stroke="#78787a" strokeWidth="2.2" />
          <path d="M13 1L21.500 7.500L13 13Z" fill="#78787a" />
        </Reload>
      </Address>
      <ToolButton $w={73} $gap={17}>
        <svg width="28" height="28" viewBox="0 0 28 28">
          <circle cx="14" cy="14" r="14" fill="#6e6e70" />
          <path d="M12 6H16V14H21L14 22.500L7 14H12Z" fill="#fff" />
        </svg>
      </ToolButton>
      <ToolButton $w={73} $gap={17}>
        <svg width="24" height="32" viewBox="0 0 24 32">
          <path d="M8 12H1.200V30H22.800V12H16M12 21V3M6.500 8L12 2L17.500 8" fill="none" stroke="#6e6e70" strokeWidth="2.2" />
        </svg>
      </ToolButton>
      <ToolButton $w={73}>
        <svg width="26" height="26" viewBox="0 0 26 26">
          <path d="M1 7H18V25H1ZM7 5V1H25V19H20" fill="none" stroke="#6e6e70" strokeWidth="2.2" />
        </svg>
      </ToolButton>
    </Toolbar>
    <TabBar>
      {TABS.map((t, i) => (
        <Tab key={i} $w={t.w} $ls={t.ls} $shift={t.shift} $active={t.active}>{t.label}</Tab>
      ))}
      <NewTab>
        <svg width="22" height="22" viewBox="0 0 22 22"><path d="M11 0V22M0 11H22" stroke="#666668" strokeWidth="1.6" /></svg>
      </NewTab>
    </TabBar>
  </>
);

const Page = () => (
  <>
    <Navbar>
      <Brand>CloudMatcher</Brand>
      <span>History</span>
      <NavRight>
        <NavUser>Logged In (cs839_grp9)</NavUser>
        <LogoutIcon width="30" height="28" viewBox="0 0 30 28">
          <path d="M18 2H7.500Q2 2 2 7.500V20.500Q2 26 7.500 26H18" fill="none" stroke="#9d9d9d" strokeWidth="4" />
          <path d="M12 10H19.500V5L30 14L19.500 23V18H12Z" fill="#9d9d9d" />
        </LogoutIcon>
        <span>Logout</span>
      </NavRight>
    </Navbar>
    <Steps>
      <Step $first $w={731} $color="#6ac78f" />
      <Step $w={808} $color="#6ac78f" />
      <Step $w={750} $color="#f5c243" />
    </Steps>
    <Panel>
      <PanelHeader>Evaluated rule service summary.</PanelHeader>
      <PanelBody>
        <Heading>
          These are the top blocking rules extracted by CloudMatcher. You can inspect them, then click "Accept &amp; Continue".
          <br />
          CloudMatcher will execute a subset of these rules (to perform blocking).
        </Heading>
        <RuleTable>
          <colgroup>
            {COLUMNS.map(([label, w]) => <col key={label} width={w} />)}
          </colgroup>
          <thead>
            <tr>{COLUMNS.map(([label]) => <Th key={label}>{label}</Th>)}</tr>
          </thead>
          <tbody>
            {RULES.map((row) => (
              <tr key={row[0]}>{row.map((value, i) => <Cell key={i} value={value} />)}</tr>
            ))}
          </tbody>
        </RuleTable>
        <Actions>
          <Button $color="#74b666" $edge="#62a654">Accept &amp; Continue</Button>
          <Button $color="#c95c54" $edge="#c0453c">Cancel Step</Button>
        </Actions>
      </PanelBody>
    </Panel>
    <Footer>© 2019 CloudMatcher.io, UW-Madison.</Footer>
  </>
);

export default function App() {
  return (
    <Desktop>
      <GlobalStyle />
      <Defs />
      <BackWindow $left={0} $width={3360} $bottom={1956} $fill="linear-gradient(90deg, #b8b8b8, #6f6f6f 70px, #707070 3290px, #b0b0b0)" />
      <BackWindow $left={50} $width={2600} $bottom={1964} $fill="linear-gradient(180deg, #5c5c5c 40px, #8c8c8c 64px)" />
      <BackWindow $left={134} $width={2544} $bottom={1978} $fill="linear-gradient(180deg, #707070 40px, #9c9c9c 78px)">
        <BackStripe $left={290} $width={31} />
        <BackStripe $left={2515} $width={29} $end />
      </BackWindow>
      <SystemMenu />
      <WindowShadow>
        <Window>
          <BrowserChrome />
          <Page />
        </Window>
      </WindowShadow>
      <Dock>
        {APPS.map(([name, running, badge]) => (
          <DockItem key={name} name={name} running={running} badge={badge} />
        ))}
        <Separator />
        {MINIMIZED.map((name) => (
          <DockItem key={name} name={name} />
        ))}
      </Dock>
    </Desktop>
  );
}
